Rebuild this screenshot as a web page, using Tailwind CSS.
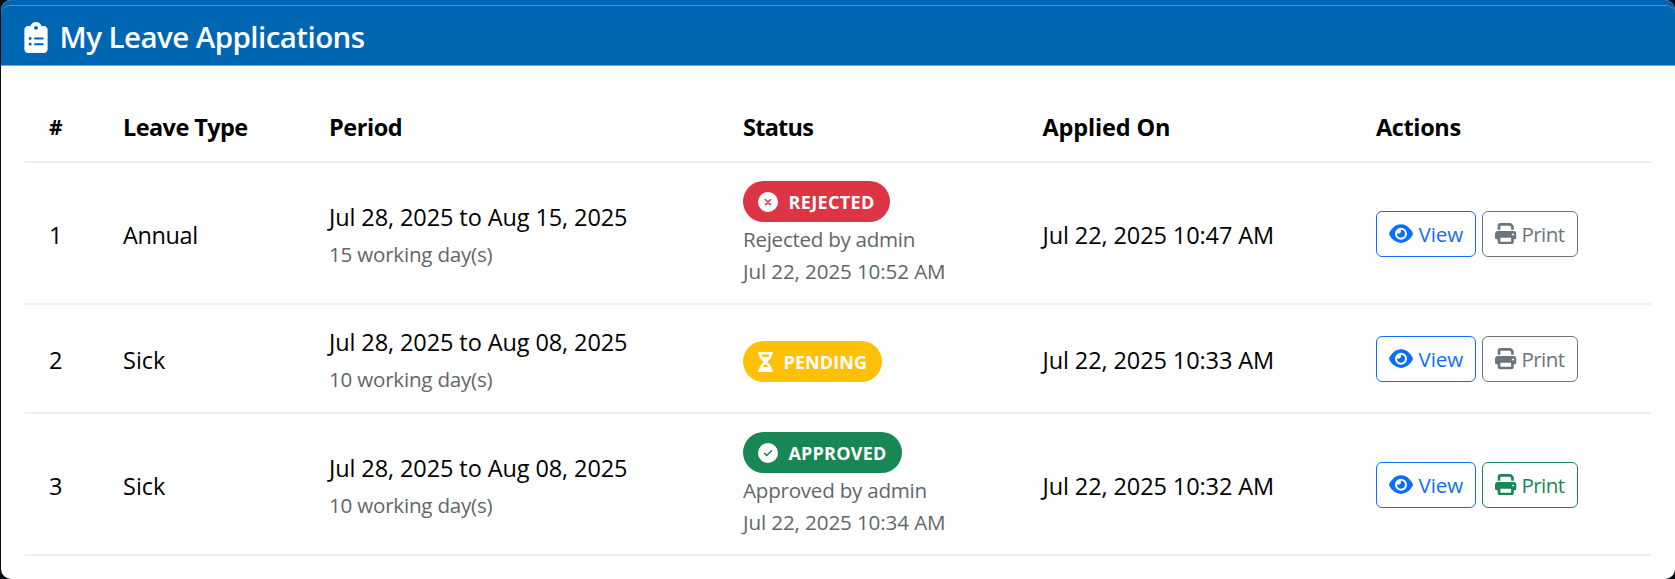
<!DOCTYPE html>
<html lang="en">
<head>
<meta charset="utf-8">
<title>My Leave Applications</title>
<script src="https://cdn.jsdelivr.net/npm/@tailwindcss/browser@4"></script>
</head>
<body class="bg-[#050d14] font-['Open_Sans','Noto_Sans',sans-serif] text-[23.5px] leading-[36px] text-black">
<svg class="hidden">
  <symbol id="clipboard" viewBox="0 0 384 512"><path d="M192 0c-41.8 0-77.4 26.7-90.5 64L64 64C28.7 64 0 92.7 0 128L0 448c0 35.3 28.7 64 64 64l256 0c35.3 0 64-28.7 64-64l0-320c0-35.3-28.7-64-64-64l-37.5 0C269.4 26.7 233.8 0 192 0zm0 64a32 32 0 1 1 0 64 32 32 0 1 1 0-64zM72 272a24 24 0 1 1 48 0 24 24 0 1 1 -48 0zm104-16l128 0c8.8 0 16 7.2 16 16s-7.2 16-16 16l-128 0c-8.8 0-16-7.2-16-16s7.2-16 16-16zM72 368a24 24 0 1 1 48 0 24 24 0 1 1 -48 0zm88 0c0-8.8 7.2-16 16-16l128 0c8.8 0 16 7.2 16 16s-7.2 16-16 16l-128 0c-8.8 0-16-7.2-16-16z"/></symbol>
  <symbol id="xmark" viewBox="0 0 512 512"><circle cx="256" cy="256" r="256"/><path d="M190 194L322 326M322 194L190 326" fill="none" stroke="#dc3545" stroke-width="38" stroke-linecap="round"/></symbol>
  <symbol id="check" viewBox="0 0 512 512"><circle cx="256" cy="256" r="256"/><path d="M166 262L224 320L346 198" fill="none" stroke="#198754" stroke-width="36" stroke-linecap="round" stroke-linejoin="round"/></symbol>
  <symbol id="hourglass" viewBox="0 0 384 512"><path d="M32 0C14.3 0 0 14.3 0 32S14.3 64 32 64l0 11c0 42.4 16.9 83.1 46.9 113.1L146.7 256 78.9 323.9C48.9 353.9 32 394.6 32 437l0 11c-17.7 0-32 14.3-32 32s14.3 32 32 32l32 0 256 0 32 0c17.7 0 32-14.3 32-32s-14.3-32-32-32l0-11c0-42.4-16.9-83.1-46.9-113.1L237.3 256l67.9-67.9c30-30 46.9-70.7 46.9-113.1l0-11c17.7 0 32-14.3 32-32s-14.3-32-32-32L320 0 64 0 32 0zM96 75l0-11 192 0 0 11c0 19-5.6 37.4-16 53L112 128c-10.3-15.6-16-34-16-53zm16 309c3.5-5.3 7.6-10.3 12.1-14.9L192 301.3l67.9 67.9c4.6 4.6 8.6 9.6 12.1 14.9L112 384z"/></symbol>
  <symbol id="eye" viewBox="0 0 576 512"><path d="M288 32c-80.8 0-145.5 36.8-192.6 80.6C48.6 156 17.3 208 2.5 243.7c-3.3 7.9-3.3 16.7 0 24.6C17.3 304 48.6 356 95.4 399.4C142.5 443.2 207.2 480 288 480s145.5-36.8 192.6-80.6c46.8-43.5 78.1-95.4 93-131.1c3.3-7.9 3.3-16.7 0-24.6c-14.9-35.7-46.2-87.7-93-131.1C433.5 68.8 368.8 32 288 32zM144 256a144 144 0 1 1 288 0 144 144 0 1 1 -288 0zm144-64c0 35.3-28.7 64-64 64c-7.1 0-13.9-1.2-20.3-3.3c-5.5-1.8-11.9 1.6-11.7 7.4c.3 6.9 1.3 13.8 3.2 20.7c13.7 51.2 66.4 81.6 117.6 67.9s81.6-66.4 67.9-117.6c-11.1-41.5-47.8-69.4-88.6-71.1c-5.8-.2-9.2 6.1-7.4 11.7c2.1 6.4 3.3 13.2 3.3 20.3z"/></symbol>
  <symbol id="print" viewBox="0 0 512 512"><path d="M128 0C92.7 0 64 28.7 64 64l0 96 64 0 0-96 226.7 0L384 93.3l0 66.7 64 0 0-66.7c0-17-6.7-33.3-18.7-45.3L400 18.7C388 6.7 371.7 0 354.7 0L128 0zM384 352l0 32 0 64-256 0 0-64 0-16 0-16 256 0zm64 32l32 0c17.7 0 32-14.3 32-32l0-96c0-35.3-28.7-64-64-64L64 192c-35.3 0-64 28.7-64 64l0 96c0 17.7 14.3 32 32 32l32 0 0 64c0 35.3 28.7 64 64 64l256 0c35.3 0 64-28.7 64-64l0-64zM432 248a24 24 0 1 1 0 48 24 24 0 1 1 0-48z"/></symbol>
</svg>

<main class="ml-px flex h-[579px] flex-col overflow-hidden rounded-[10px] bg-white">
  <header class="h-[66px] shrink-0 border-b border-[#6aa9dc] bg-[#0066b3] pt-[5px]">
    <div class="flex h-[60px] items-center rounded-t-[9px] border-t border-[#4d94ca] pl-[23px] pt-[3px] text-white">
      <svg class="mr-[11.5px] h-[31px] w-[24px] fill-current"><use href="#clipboard"/></svg>
      <h1 class="text-[29.5px] font-semibold tracking-[-0.55px]">My Leave Applications</h1>
    </div>
  </header>

  <section class="mx-6 mt-6 w-[1626px]">
    <div class="grid h-[73px] grid-cols-[74px_206px_414px_299.5px_333.5px_1fr] items-center border-b-2 border-[#eeeef5] pt-[2px] font-bold *:pl-6">
      <div class="text-[21px]">#</div>
      <div class="tracking-[-0.58px]">Leave Type</div>
      <div class="tracking-[-0.45px]">Period</div>
      <div class="tracking-[-0.75px]">Status</div>
      <div class="tracking-[-0.15px]">Applied On</div>
      <div class="tracking-[-0.38px]">Actions</div>
    </div>

    <div class="grid h-[142px] grid-cols-[74px_206px_414px_299.5px_333.5px_1fr] items-center border-b-2 border-[#eeeef5] *:pl-6">
      <div class="pt-1">1</div>
      <div class="pt-1 tracking-[-0.4px]">Annual</div>
      <div class="pt-1.5 tracking-[-0.1px]">Jul 28, 2025 to Aug 15, 2025<div class="text-[20.6px] leading-[38px] tracking-[-0.22px] text-[#636669]">15 working day(s)</div></div>
      <div class="pt-[2px] text-[20.6px] leading-[32px] text-[#636669]">
        <div class="mb-px flex h-[41px] w-[147px] items-center rounded-full bg-[#dc3545] pl-[15px] pt-px text-[18px] font-bold tracking-[0.35px] text-white"><svg class="mr-[10.5px] size-5 fill-current"><use href="#xmark"/></svg>REJECTED</div>
        <div class="tracking-[-0.29px]">Rejected by admin</div>
        <div class="tracking-[-0.11px]">Jul 22, 2025 10:52 AM</div>
      </div>
      <div class="pt-1 tracking-[-0.1px]">Jul 22, 2025 10:47 AM</div>
      <div class="flex gap-1.5 pt-px text-[20.6px]">
        <button class="flex h-[46px] w-[100px] items-center rounded-[6px] border border-[#0d6efd] pl-3 tracking-[-0.1px] text-[#0d6efd]"><svg class="mr-[5.5px] h-[21.3px] w-6 fill-current"><use href="#eye"/></svg>View</button>
        <button class="flex h-[46px] w-[96px] items-center rounded-[6px] border border-[#6c757d] pl-3 tracking-[-0.6px] text-[#6c757d]"><svg class="mr-[5px] size-[21.5px] fill-current"><use href="#print"/></svg>Print</button>
      </div>
    </div>

    <div class="grid h-[109px] grid-cols-[74px_206px_414px_299.5px_333.5px_1fr] items-center border-b-2 border-[#eeeef5] *:pl-6">
      <div class="pt-[2.5px]">2</div>
      <div class="pt-[2.5px]">Sick</div>
      <div class="pt-[4.5px] tracking-[-0.1px]">Jul 28, 2025 to Aug 08, 2025<div class="text-[20.6px] leading-[38px] tracking-[-0.22px] text-[#636669]">10 working day(s)</div></div>
      <div class="pt-[5px]">
        <div class="flex h-[41px] w-[139px] items-center rounded-full bg-[#ffc107] pl-[15px] pt-px text-[18px] font-bold tracking-[0.1px] text-white"><svg class="mr-[10.5px] h-5 w-[15px] fill-current"><use href="#hourglass"/></svg>PENDING</div>
      </div>
      <div class="pt-[2.5px] tracking-[-0.1px]">Jul 22, 2025 10:33 AM</div>
      <div class="flex gap-1.5 pt-px text-[20.6px]">
        <button class="flex h-[46px] w-[100px] items-center rounded-[6px] border border-[#0d6efd] pl-3 tracking-[-0.1px] text-[#0d6efd]"><svg class="mr-[5.5px] h-[21.3px] w-6 fill-current"><use href="#eye"/></svg>View</button>
        <button class="flex h-[46px] w-[96px] items-center rounded-[6px] border border-[#6c757d] pl-3 tracking-[-0.6px] text-[#6c757d]"><svg class="mr-[5px] size-[21.5px] fill-current"><use href="#print"/></svg>Print</button>
      </div>
    </div>

    <div class="grid h-[142px] grid-cols-[74px_206px_414px_299.5px_333.5px_1fr] items-center border-b-2 border-[#eeeef5] *:pl-6">
      <div class="pt-1">3</div>
      <div class="pt-1">Sick</div>
      <div class="pt-1.5 tracking-[-0.1px]">Jul 28, 2025 to Aug 08, 2025<div class="text-[20.6px] leading-[38px] tracking-[-0.22px] text-[#636669]">10 working day(s)</div></div>
      <div class="pt-[2px] text-[20.6px] leading-[32px] text-[#636669]">
        <div class="mb-px flex h-[41px] w-[159px] items-center rounded-full bg-[#198754] pl-[15px] pt-px text-[18px] font-bold tracking-[0.2px] text-white"><svg class="mr-[10.5px] size-5 fill-current"><use href="#check"/></svg>APPROVED</div>
        <div class="tracking-[-0.24px]">Approved by admin</div>
        <div class="tracking-[-0.11px]">Jul 22, 2025 10:34 AM</div>
      </div>
      <div class="pt-1 tracking-[-0.1px]">Jul 22, 2025 10:32 AM</div>
      <div class="flex gap-1.5 pt-px text-[20.6px]">
        <button class="flex h-[46px] w-[100px] items-center rounded-[6px] border border-[#0d6efd] pl-3 tracking-[-0.1px] text-[#0d6efd]"><svg class="mr-[5.5px] h-[21.3px] w-6 fill-current"><use href="#eye"/></svg>View</button>
        <button class="flex h-[46px] w-[96px] items-center rounded-[6px] border border-[#198754] pl-3 tracking-[-0.6px] text-[#198754]"><svg class="mr-[5px] size-[21.5px] fill-current"><use href="#print"/></svg>Print</button>
      </div>
    </div>
  </section>
</main>
</body>
</html>
